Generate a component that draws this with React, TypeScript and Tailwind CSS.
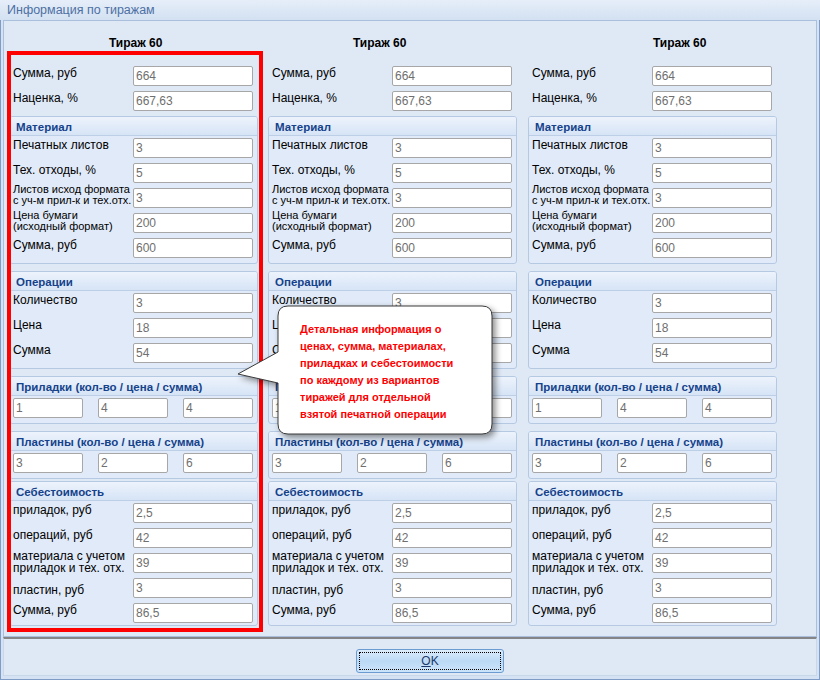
import React from "react";

type Kind = "one" | "two4" | "two3" | "two3b" | "low";
type Row = { label: string[]; value: string; kind?: Kind };

const labelCls: Record<Kind, string> = {
  one: "leading-[15px] text-[12px]",
  two4: "-mt-[4px] leading-[11px] text-[11px]",
  two3: "-mt-[3px] leading-[11px] text-[11px]",
  two3b: "-mt-[3px] leading-[12px] text-[12px]",
  low: "pt-[5px] leading-[15px] text-[12px]",
};

function Input({ value, w = "w-[120px]" }: { value: string; w?: string }) {
  return (
    <div
      className={`${w} h-[20px] shrink-0 bg-white border border-[#a7a7a7] rounded-[2px] pl-[2px] leading-[18px] text-[12px] text-[#6f6f6f] relative`}
    >
      {value}
    </div>
  );
}

function FieldRow({ row }: { row: Row }) {
  const kind = row.kind ?? "one";
  return (
    <div className="flex h-[20px]">
      <div className={`w-[120px] shrink-0 whitespace-nowrap text-black ${labelCls[kind]}`}>
        {row.label.map((l, i) => (
          <div key={i}>{l}</div>
        ))}
      </div>
      <Input value={row.value} />
    </div>
  );
}

function Group({
  title,
  children,
  mt,
  pb,
}: {
  title: string;
  children: React.ReactNode;
  mt: string;
  pb: string;
}) {
  return (
    <div className={`${mt} w-[249px] border border-[#b5c9e3] rounded-[3px] bg-[#e0eaf8]`}>
      <div className="h-[19px] border-b border-[#bccfe7] bg-linear-to-b from-[#edf3fc] to-[#d6e4f6] rounded-t-[2px] pl-[6px] leading-[20px] text-[11.5px] font-bold text-[#15428b]">
        {title}
      </div>
      <div className={`px-[3px] pt-[2px] ${pb} flex flex-col gap-[5px]`}>{children}</div>
    </div>
  );
}

const material: Row[] = [
  { label: ["Печатных листов"], value: "3" },
  { label: ["Тех. отходы, %"], value: "5" },
  { label: ["Листов исход формата", "с уч-м прил-к и тех.отх."], value: "3", kind: "two4" },
  { label: ["Цена бумаги", "(исходный формат)"], value: "200", kind: "two3" },
  { label: ["Сумма, руб"], value: "600" },
];

const ops: Row[] = [
  { label: ["Количество"], value: "3" },
  { label: ["Цена"], value: "18" },
  { label: ["Сумма"], value: "54" },
];

const cost: Row[] = [
  { label: ["приладок, руб"], value: "2,5" },
  { label: ["операций, руб"], value: "42" },
  { label: ["материала с учетом", "приладок и тех. отх."], value: "39", kind: "two3b" },
  { label: ["пластин, руб"], value: "3", kind: "low" },
  { label: ["Сумма, руб"], value: "86,5" },
];

function Triple({ values }: { values: string[] }) {
  return (
    <div className="flex gap-[15px]">
      {values.map((v, i) => (
        <Input key={i} value={v} w="w-[70px]" />
      ))}
    </div>
  );
}

function Column({ headerPad, ml }: { headerPad: string; ml: string }) {
  return (
    <div className={`${ml} w-[249px] shrink-0 flex flex-col`}>
      <div className={`h-[16px] leading-[16px] ${headerPad} text-[12px] font-bold text-black`}>Тираж 60</div>
      <div className="mt-[15px] pl-[4px] flex flex-col gap-[5px]">
        <FieldRow row={{ label: ["Сумма, руб"], value: "664" }} />
        <FieldRow row={{ label: ["Наценка, %"], value: "667,63" }} />
      </div>
      <Group title="Материал" mt="mt-[5px]" pb="pb-[5px]">
        {material.map((r, i) => (
          <FieldRow key={i} row={r} />
        ))}
      </Group>
      <Group title="Операции" mt="mt-[7px]" pb="pb-[5px]">
        {ops.map((r, i) => (
          <FieldRow key={i} row={r} />
        ))}
      </Group>
      <Group title="Приладки (кол-во / цена / сумма)" mt="mt-[7px]" pb="pb-[5px]">
        <Triple values={["1", "4", "4"]} />
      </Group>
      <Group title="Пластины (кол-во / цена / сумма)" mt="mt-[7px]" pb="pb-[5px]">
        <Triple values={["3", "2", "6"]} />
      </Group>
      <Group title="Себестоимость" mt="mt-[2px]" pb="pb-[2px]">
        {cost.map((r, i) => (
          <FieldRow key={i} row={r} />
        ))}
      </Group>
    </div>
  );
}

export default function App() {
  return (
    <div className="relative w-[820px] h-[680px] overflow-hidden bg-[#d4e2f3] shadow-[inset_0_0_0_1px_#7e9cc5] font-['Liberation_Sans',Arial,sans-serif] flex flex-col">
      <div className="h-[20px] shrink-0 bg-linear-to-b from-[#e6eef9] to-[#d3e1f2] pl-[7px] leading-[20px] text-[12.5px] text-[#4d70a3]">
        Информация по тиражам
      </div>
      <div className="ml-[3px] w-[814px] h-[617px] shrink-0 border border-[#a9bfdb] bg-[#dfe9f6] pt-[14px] pl-[5px] flex">
        <Column headerPad="pl-[100px]" ml="" />
        <Column headerPad="pl-[85px]" ml="ml-[10px]" />
        <Column headerPad="pl-[125px]" ml="ml-[11px]" />
      </div>
      <div className="ml-[3px] w-[814px] h-[39px] shrink-0 border-t-2 border-t-[#858585] border-x border-b border-x-[#c9d7ea] border-b-[#c9d7ea] bg-[#dfe9f6]">
        <button className="mt-[10px] ml-[352px] w-[148px] h-[24px] rounded-[3px] border border-[#6c9bd2] bg-linear-to-b from-[#dcecfb] via-[#bcdaf5] to-[#cbe4f9] p-[2px] text-[12px] text-[#1c3a6a]">
          <div className="w-full h-full border border-dotted border-black flex items-center justify-center leading-none">
            <span>
              <span className="underline">O</span>K
            </span>
          </div>
        </button>
      </div>

      {/* red highlight */}
      <div className="absolute left-[7px] top-[51px] w-[256px] h-[581px] border-4 border-[#ff0000] pointer-events-none" />

      {/* callout */}
      <svg
        className="absolute left-[230px] top-[298px] drop-shadow-[3px_3px_3px_rgba(0,0,0,0.45)]"
        width="275"
        height="150"
        viewBox="0 0 275 150"
      >
        <path
          d="M 58 8 H 252 Q 262 8 262 18 V 126 Q 262 136 252 136 H 58 Q 48 136 48 126 V 85 L 8 76 L 48 54 V 18 Q 48 8 58 8 Z"
          fill="#ffffff"
          stroke="#3a3a3a"
          strokeWidth="1"
        />
      </svg>
      <div className="absolute left-[300px] top-[321px] text-[11px] font-bold leading-[17px] text-[#ff0000] whitespace-nowrap">
        <div>Детальная информация о</div>
        <div>ценах, сумма, материалах,</div>
        <div>приладках и себестоимости</div>
        <div>по каждому из вариантов</div>
        <div>тиражей для отдельной</div>
        <div>взятой печатной операции</div>
      </div>
    </div>
  );
}
